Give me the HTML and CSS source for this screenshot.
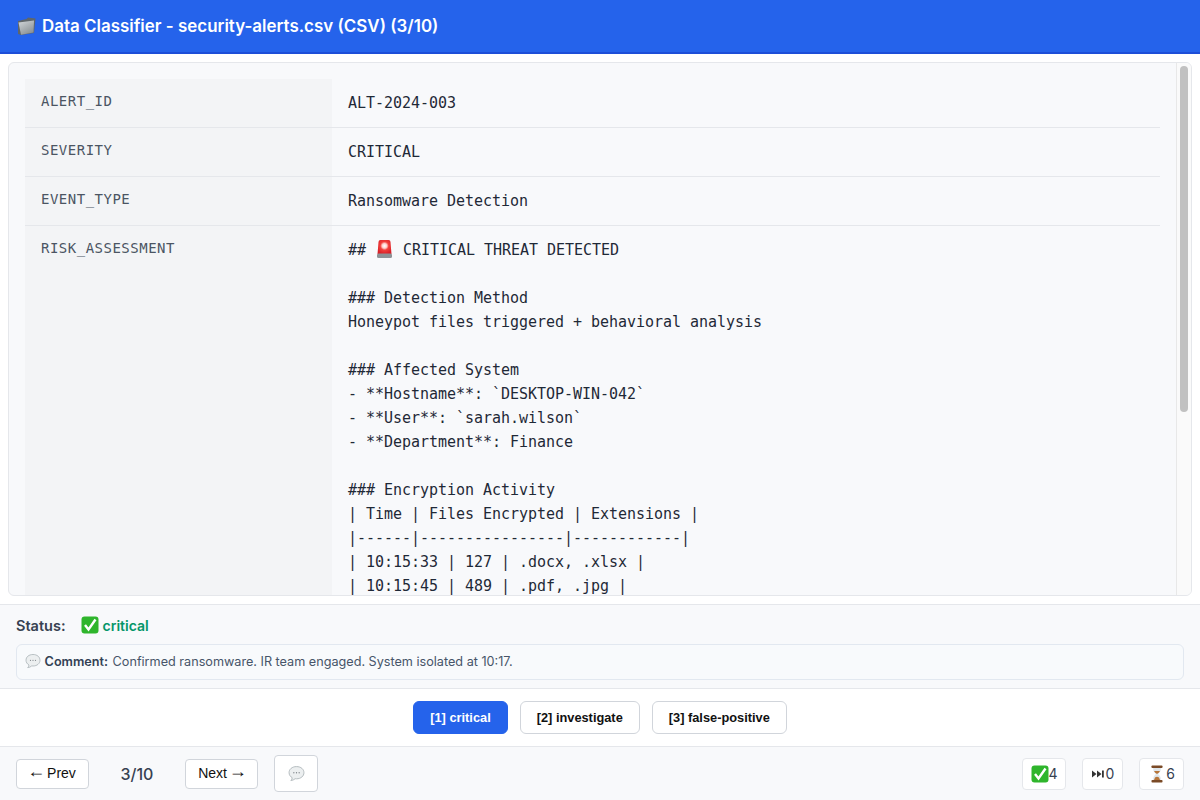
FILE: index.html
```html
<!DOCTYPE html>
<html lang="en">
<head>
<meta charset="utf-8">
<title>Data Classifier</title>
<link rel="stylesheet" href="styles.css">
</head>
<body>
<div class="app">
  <header class="topbar">
    <svg class="ico-folder" viewBox="0 0 20 20" width="20" height="20"><defs><linearGradient id="fg" x1="0" y1="0" x2="0.6" y2="1"><stop offset="0" stop-color="#d3d8da"/><stop offset="1" stop-color="#8b9296"/></linearGradient></defs><path d="M2 5 L2 18 L5 19 L18 17 L19.500 2.500 L12 1.500 L10.500 3 Z" fill="#5f666a"/><path d="M2.500 6.500 L18 4.500 L17.500 16.500 L5 18.800 Z" fill="url(#fg)"/></svg>
    <h1 class="title">Data Classifier - security-alerts.csv (CSV) (3/10)</h1>
  </header>

  <main class="panel">
    <div class="panel-body">
      <table class="record">
        <tr><th>alert_id</th><td>ALT-2024-003</td></tr>
        <tr><th>severity</th><td>CRITICAL</td></tr>
        <tr><th>event_type</th><td>Ransomware Detection</td></tr>
        <tr><th>risk_assessment</th><td><pre class="val">## <svg class="ico-siren" viewBox="0 0 19 20" width="19" height="20"><defs><radialGradient id="sg" cx="0.5" cy="0.42" r="0.6"><stop offset="0" stop-color="#fff"/><stop offset="0.28" stop-color="#ffd0cc"/><stop offset="0.5" stop-color="#f2403c"/><stop offset="1" stop-color="#d81e26"/></radialGradient></defs><path d="M3.500 3 Q3.500 1 5.500 1 L13.500 1 Q15.500 1 15.500 3 L16.500 15 L2.500 15 Z" fill="url(#sg)"/><rect x="2" y="14.500" width="15" height="4.500" rx="1.500" fill="#8d9296"/></svg> CRITICAL THREAT DETECTED

### Detection Method
Honeypot files triggered + behavioral analysis

### Affected System
- **Hostname**: `DESKTOP-WIN-042`
- **User**: `sarah.wilson`
- **Department**: Finance

### Encryption Activity
| Time | Files Encrypted | Extensions |
|------|----------------|------------|
| 10:15:33 | 127 | .docx, .xlsx |
| 10:15:45 | 489 | .pdf, .jpg |</pre></td></tr>
      </table>
    </div>
    <div class="scrollbar"><div class="thumb"></div></div>
  </main>

  <section class="info">
    <div class="status">
      <span class="status-label">Status:</span>
      <span class="status-value"><svg class="ico-check" viewBox="0 0 18 18" width="18" height="18"><rect x="0.500" y="0.500" width="17" height="17" rx="3" fill="#2fb52c"/><path d="M4 9 L7.500 13.500 L14.500 3.500" fill="none" stroke="#fff" stroke-width="2.400"/></svg> critical</span>
    </div>
    <div class="comment"><svg class="ico-bubble" viewBox="0 0 16 16" width="16" height="16"><path d="M8 1.500 C3.800 1.500 1 4 1 7.200 C1 9.300 2.200 11 4 12 C3.900 13 3.300 14 2.700 14.600 C4.300 14.500 5.800 13.800 6.700 12.900 C7.100 12.900 7.600 13 8 13 C12.200 13 15 10.400 15 7.200 C15 4 12.200 1.500 8 1.500 Z" fill="#eceff0" stroke="#aab2b6" stroke-width="0.800"/><circle cx="5.500" cy="7.300" r="0.600" fill="#7d8488"/><circle cx="8" cy="7.300" r="0.600" fill="#7d8488"/><circle cx="10.500" cy="7.300" r="0.600" fill="#7d8488"/></svg> <strong>Comment:</strong> Confirmed ransomware. IR team engaged. System isolated at 10:17.</div>
  </section>

  <section class="choices">
    <button class="choice active">[1] critical</button>
    <button class="choice">[2] investigate</button>
    <button class="choice">[3] false-positive</button>
  </section>

  <footer class="nav">
    <div class="nav-left">
      <button class="nav-btn"><span class="arrow">←</span> Prev</button>
      <span class="pos">3/10</span>
      <button class="nav-btn">Next <span class="arrow">→</span></button>
      <button class="note-btn"><svg class="ico-bubble" viewBox="0 0 16 16" width="17" height="17"><path d="M8 1.500 C3.800 1.500 1 4 1 7.200 C1 9.300 2.200 11 4 12 C3.900 13 3.300 14 2.700 14.600 C4.300 14.500 5.800 13.800 6.700 12.900 C7.100 12.900 7.600 13 8 13 C12.200 13 15 10.400 15 7.200 C15 4 12.200 1.500 8 1.500 Z" fill="#eceff0" stroke="#aab2b6" stroke-width="0.800"/><circle cx="5.500" cy="7.300" r="0.600" fill="#7d8488"/><circle cx="8" cy="7.300" r="0.600" fill="#7d8488"/><circle cx="10.500" cy="7.300" r="0.600" fill="#7d8488"/></svg></button>
    </div>
    <div class="stats">
      <span class="stat"><svg class="ico-check" viewBox="0 0 18 18" width="18" height="18"><rect x="0.500" y="0.500" width="17" height="17" rx="3" fill="#2fb52c"/><path d="M4 9 L7.500 13.500 L14.500 3.500" fill="none" stroke="#fff" stroke-width="2.400"/></svg>4</span>
      <span class="stat"><svg class="ico-skip" viewBox="0 0 14 8" width="14" height="8"><path d="M1 0.500 L5.500 4 L1 7.500 Z M6 0.500 L10.500 4 L6 7.500 Z" fill="#333"/><rect x="11" y="0.500" width="1.800" height="7" fill="#333"/></svg>0</span>
      <span class="stat"><svg class="ico-glass" viewBox="0 0 18 18" width="18" height="18"><path d="M5 2.500 L13 2.500 L12.500 6 Q11.500 8 10 9 Q11.500 10 12.500 12 L13 15.500 L5 15.500 L5.500 12 Q6.500 10 8 9 Q6.500 8 5.500 6 Z" fill="#dfe6ea"/><path d="M6 6 L12 6 Q11 8 9 9 Q7 8 6 6 Z M6 15 L12 15 L11 12.500 Q9 11 7 12.500 Z" fill="#b8763a"/><rect x="3.500" y="0.500" width="11" height="2.500" rx="0.800" fill="#7a4a26"/><rect x="3.500" y="15" width="11" height="2.500" rx="0.800" fill="#7a4a26"/></svg>6</span>
    </div>
  </footer>
</div>
</body>
</html>
```

FILE: styles.css
```css
* { box-sizing: border-box; }
html, body { margin: 0; height: 100%; }
body { font-family: Inter, "Liberation Sans", sans-serif; background: #fff; color: #1f2937; }
.app { height: 800px; display: flex; flex-direction: column; }

.topbar { height: 54px; flex: none; background: #2563eb; border-bottom: 2px solid #1d4ed8; padding: 0 16px; display: flex; align-items: center; gap: 6px; }
.title { margin: 0; font-size: 16.95px; font-weight: 600; line-height: 24px; color: #fff; }
.ico-folder { flex: none; }

.panel { flex: 1 1 0; min-height: 0; margin: 8px; background: #f8f9fb; border: 1px solid #e5e7eb; border-radius: 6px; overflow: hidden; display: flex; }
.panel-body { flex: 1 1 0; min-width: 0; padding: 16px; overflow: hidden; }
.scrollbar { flex: none; width: 15px; padding: 3px 3px 0; background: #fafafa; border-left: 1px solid #e8e8e8; }
.thumb { height: 346px; background: #c1c1c1; border-radius: 4px; }

.record { width: 100%; border-collapse: collapse; font-family: "DejaVu Sans Mono", monospace; }
.record tr { border-bottom: 1px solid #e5e7eb; }
.record tr:last-child { border-bottom: 0; }
.record th { width: 307px; padding: 12px 16px; background: #f3f4f6; text-align: left; vertical-align: top; font-size: 14px; font-weight: 400; line-height: 20px; letter-spacing: 0.5px; text-transform: uppercase; color: #4b5563; }
.record td { padding: 12px 16px; vertical-align: top; font-size: 15px; line-height: 24px; letter-spacing: -0.03px; color: #1f2937; }
.val { margin: 0; font: inherit; letter-spacing: inherit; white-space: pre-wrap; }
.ico-siren { vertical-align: -4px; }

.info { flex: none; background: #f8f9fb; border-top: 1px solid #e5e7eb; border-bottom: 1px solid #e5e7eb; padding: 10px 16px 8px; }
.status { display: flex; align-items: center; gap: 15px; height: 20px; margin-bottom: 9px; }
.status-label { font-size: 14.5px; font-weight: 600; color: #374151; }
.status-value { font-size: 14px; font-weight: 600; color: #059669; display: flex; align-items: center; gap: 4px; }
.comment { height: 36px; line-height: 34px; padding: 0 8px; background: #f8fafc; border: 1px solid #e2e8f0; border-radius: 6px; font-size: 12.65px; color: #475569; }
.comment strong { font-weight: 600; color: #334155; margin-right: 1px; }
.comment .ico-bubble { vertical-align: -3px; }

.choices { flex: none; height: 57px; display: flex; justify-content: center; align-items: center; gap: 12px; background: #fff; }
.choice { height: 33px; padding: 0 16px; background: #fff; border: 1px solid #d1d5db; border-radius: 6px; font: 700 12.8px "Liberation Sans", Arial, sans-serif; color: #111; }
.choice.active { background: #2563eb; border-color: #2563eb; color: #fff; }

.nav { flex: none; height: 54px; background: #f8f9fb; border-top: 1px solid #e5e7eb; padding: 0 16px; display: flex; justify-content: space-between; align-items: center; }
.nav-left { display: flex; align-items: center; gap: 16px; }
.nav-btn { width: 73px; height: 30px; padding: 0 0 1px; background: #fff; border: 1px solid #d1d5db; border-radius: 4px; font: 400 14px "Liberation Sans", Arial, sans-serif; color: #111; }
.arrow { font-size: 18px; line-height: 0; margin: 0 -2px; vertical-align: 1px; }
.pos { width: 64px; text-align: center; font-size: 16px; font-weight: 500; color: #374151; }
.note-btn { width: 44px; height: 37px; padding: 0; background: #fff; border: 1px solid #d1d5db; border-radius: 4px; display: flex; align-items: center; justify-content: center; }
.stats { display: flex; gap: 16px; }
.stat { height: 32px; padding: 0 8px; background: #fff; border: 1px solid #e5e7eb; border-radius: 4px; display: flex; align-items: center; font-size: 14px; color: #374151; }
.stat .ico-check { margin-right: -1px; }
```
